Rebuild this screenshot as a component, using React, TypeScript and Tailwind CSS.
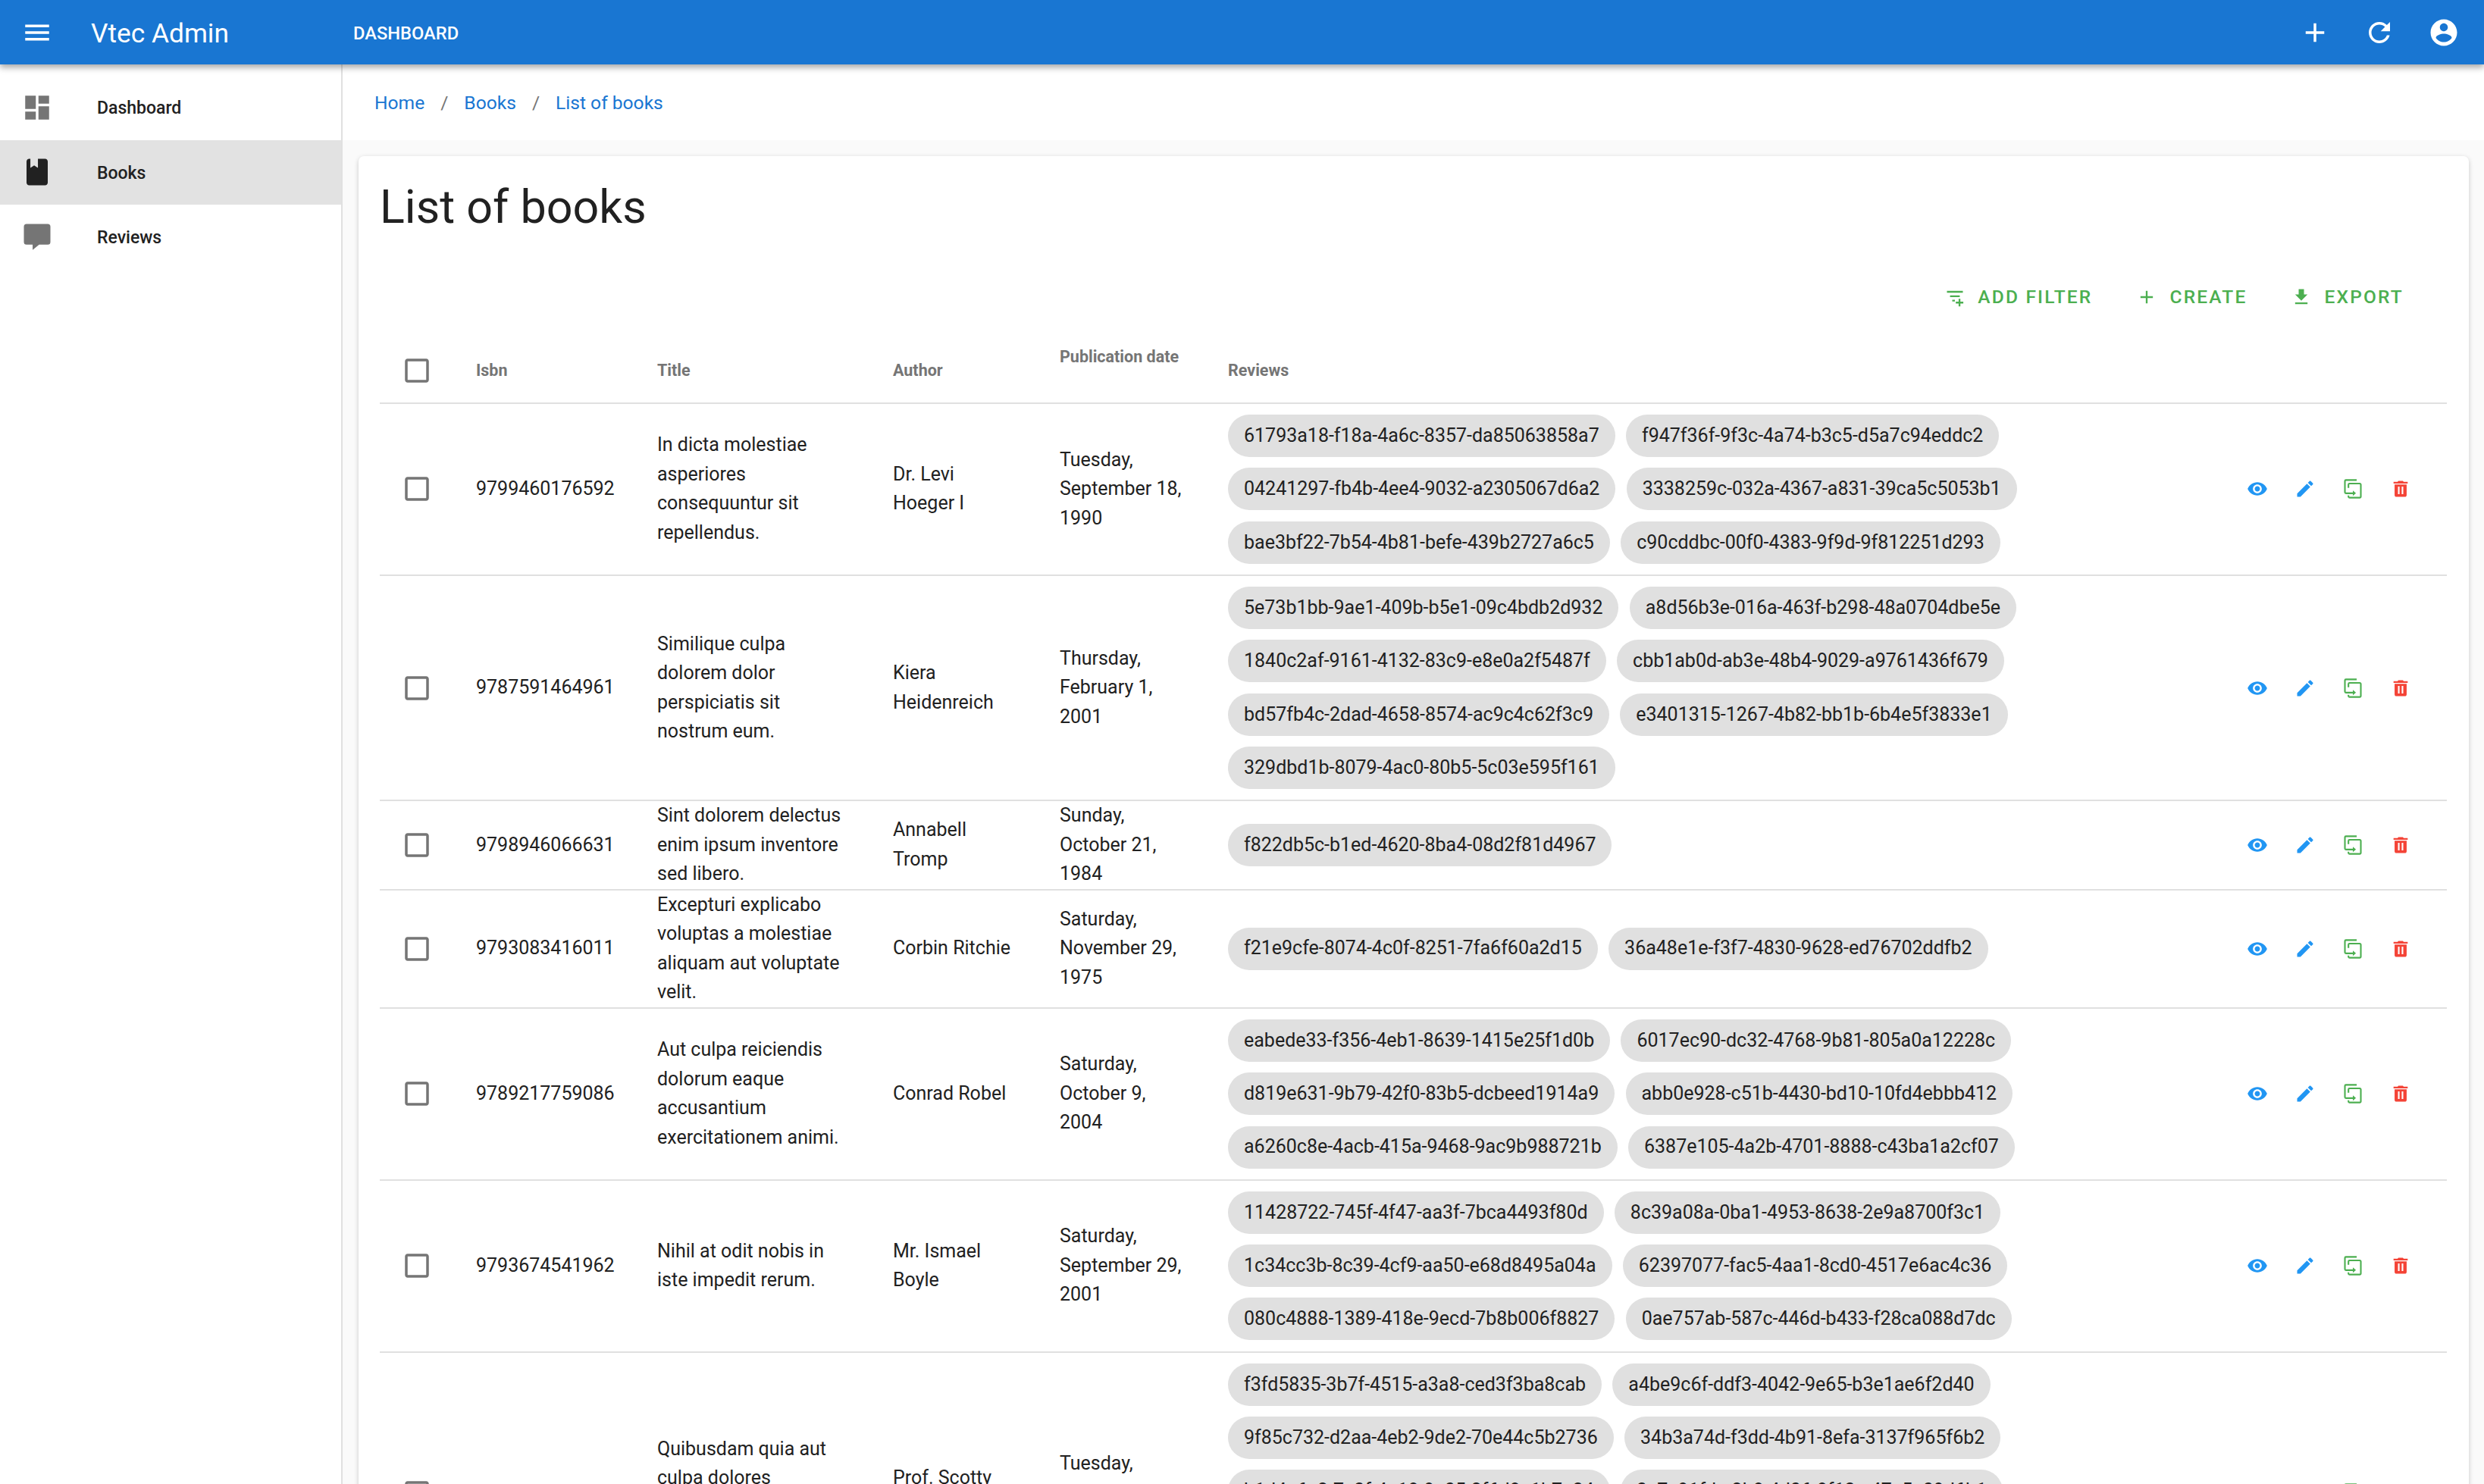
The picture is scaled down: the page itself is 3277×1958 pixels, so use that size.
import React from "react";

const P = {
  menu: "M3 18h18v-2H3v2zm0-5h18v-2H3v2zm0-7v2h18V6H3z",
  dash: "M3 13h8V3H3v10zm0 8h8v-6H3v6zm10 0h8V11h-8v10zm0-18v6h8V3h-8z",
  book: "M18 2h-5.4v6.8L9.75 7 6.9 8.8V2H6C4.9 2 4 2.9 4 4v16c0 1.1.9 2 2 2h12c1.1 0 2-.9 2-2V4c0-1.1-.9-2-2-2z",
  comment: "M4 2h16a2 2 0 0 1 2 2v11.6a2 2 0 0 1-2 2h-6.5L8.6 21.6V17.6H4a2 2 0 0 1-2-2V4a2 2 0 0 1 2-2z",
  add: "M19 13h-6v6h-2v-6H5v-2h6V5h2v6h6v2z",
  refresh: "M17.65 6.35C16.2 4.9 14.21 4 12 4c-4.42 0-7.99 3.58-7.99 8s3.57 8 7.99 8c3.73 0 6.84-2.55 7.73-6h-2.08c-.82 2.33-3.04 4-5.65 4-3.31 0-6-2.69-6-6s2.69-6 6-6c1.66 0 3.14.69 4.22 1.78L13 11h7V4l-2.35 2.35z",
  account: "M12 2C6.48 2 2 6.48 2 12s4.48 10 10 10 10-4.48 10-10S17.52 2 12 2zm0 3c1.66 0 3 1.34 3 3s-1.34 3-3 3-3-1.34-3-3 1.34-3 3-3zm0 14.2c-2.5 0-4.71-1.28-6-3.22.03-1.99 4-3.08 6-3.08 1.99 0 5.97 1.09 6 3.08-1.29 1.94-3.5 3.22-6 3.22z",
  filter: "M3 5h18v2H3zM6.5 10h11v2h-11zM9 15h3v2H9zM16.2 14h2v3.2h3.3v2h-3.3v3.3h-2v-3.3H13v-2h3.2z",
  download: "M19 9h-4V3H9v6H5l7 7 7-7zM5 18v2h14v-2H5z",
  eye: "M12 4.5C7 4.5 2.73 7.61 1 12c1.73 4.39 6 7.5 11 7.5s9.27-3.11 11-7.5c-1.73-4.39-6-7.5-11-7.5zM12 17c-2.76 0-5-2.24-5-5s2.24-5 5-5 5 2.24 5 5-2.24 5-5 5zm0-8c-1.66 0-3 1.34-3 3s1.34 3 3 3 3-1.34 3-3-1.34-3-3-3z",
  edit: "M3 17.25V21h3.75L17.81 9.94l-3.75-3.75L3 17.25zM20.71 7.04c.39-.39.39-1.02 0-1.41l-2.34-2.34c-.39-.39-1.02-.39-1.41 0l-1.83 1.83 3.75 3.75 1.83-1.83z",
  trash: "M5.2 19c0 1.1.9 2 2 2h9.6c1.1 0 2-.9 2-2V7H5.2v12zM20 4h-4.5l-1-1h-5l-1 1H4v2h16V4zM9 9.5V18h1.8V9.5zM13.2 9.5V18H15V9.5z",
  box: "M19 5v14H5V5h14m0-2H5c-1.1 0-2 .9-2 2v14c0 1.1.9 2 2 2h14c1.1 0 2-.9 2-2V5c0-1.1-.9-2-2-2z",
};

function Icon({ d, className }: { d: string; className: string }) {
  return (
    <svg viewBox="0 0 24 24" fill="currentColor" fillRule="evenodd" className={`shrink-0 ${className}`}>
      <path d={d} />
    </svg>
  );
}

function CloneIcon() {
  return (
    <svg viewBox="0 0 24 24" className="w-[28px] h-[28px] shrink-0 text-[#4caf50]" fill="none" stroke="currentColor" strokeWidth="1.8">
      <path d="M16.3 2H4.2a1.2 1.2 0 0 0-1.2 1.2v12.6a1.2 1.2 0 0 0 1.2 1.2H12" />
      <path d="M7 11V7.2A1.2 1.2 0 0 1 8.2 6h11.6A1.2 1.2 0 0 1 21 7.2v13.6a1.2 1.2 0 0 1-1.2 1.2H8.2A1.2 1.2 0 0 1 7 20.8V19.5" />
      <path d="M12 14v6l3.5-3z" fill="currentColor" stroke="none" />
    </svg>
  );
}

const Check = () => <Icon d={P.box} className="w-[42px] h-[42px] text-[#757575]" />;

type Row = { isbn: string; title: string; author: string; date: string; chips: string[] };

const rows: Row[] = [
  {
    isbn: "9799460176592",
    title: "In dicta molestiae asperiores consequuntur sit repellendus.",
    author: "Dr. Levi Hoeger I",
    date: "Tuesday, September 18, 1990",
    chips: [
      "61793a18-f18a-4a6c-8357-da85063858a7",
      "f947f36f-9f3c-4a74-b3c5-d5a7c94eddc2",
      "04241297-fb4b-4ee4-9032-a2305067d6a2",
      "3338259c-032a-4367-a831-39ca5c5053b1",
      "bae3bf22-7b54-4b81-befe-439b2727a6c5",
      "c90cddbc-00f0-4383-9f9d-9f812251d293",
    ],
  },
  {
    isbn: "9787591464961",
    title: "Similique culpa dolorem dolor perspiciatis sit nostrum eum.",
    author: "Kiera Heidenreich",
    date: "Thursday, February 1, 2001",
    chips: [
      "5e73b1bb-9ae1-409b-b5e1-09c4bdb2d932",
      "a8d56b3e-016a-463f-b298-48a0704dbe5e",
      "1840c2af-9161-4132-83c9-e8e0a2f5487f",
      "cbb1ab0d-ab3e-48b4-9029-a9761436f679",
      "bd57fb4c-2dad-4658-8574-ac9c4c62f3c9",
      "e3401315-1267-4b82-bb1b-6b4e5f3833e1",
      "329dbd1b-8079-4ac0-80b5-5c03e595f161",
    ],
  },
  {
    isbn: "9798946066631",
    title: "Sint dolorem delectus enim ipsum inventore sed libero.",
    author: "Annabell Tromp",
    date: "Sunday, October 21, 1984",
    chips: ["f822db5c-b1ed-4620-8ba4-08d2f81d4967"],
  },
  {
    isbn: "9793083416011",
    title: "Excepturi explicabo voluptas a molestiae aliquam aut voluptate velit.",
    author: "Corbin Ritchie",
    date: "Saturday, November 29, 1975",
    chips: ["f21e9cfe-8074-4c0f-8251-7fa6f60a2d15", "36a48e1e-f3f7-4830-9628-ed76702ddfb2"],
  },
  {
    isbn: "9789217759086",
    title: "Aut culpa reiciendis dolorum eaque accusantium exercitationem animi.",
    author: "Conrad Robel",
    date: "Saturday, October 9, 2004",
    chips: [
      "eabede33-f356-4eb1-8639-1415e25f1d0b",
      "6017ec90-dc32-4768-9b81-805a0a12228c",
      "d819e631-9b79-42f0-83b5-dcbeed1914a9",
      "abb0e928-c51b-4430-bd10-10fd4ebbb412",
      "a6260c8e-4acb-415a-9468-9ac9b988721b",
      "6387e105-4a2b-4701-8888-c43ba1a2cf07",
    ],
  },
  {
    isbn: "9793674541962",
    title: "Nihil at odit nobis in iste impedit rerum.",
    author: "Mr. Ismael Boyle",
    date: "Saturday, September 29, 2001",
    chips: [
      "11428722-745f-4f47-aa3f-7bca4493f80d",
      "8c39a08a-0ba1-4953-8638-2e9a8700f3c1",
      "1c34cc3b-8c39-4cf9-aa50-e68d8495a04a",
      "62397077-fac5-4aa1-8cd0-4517e6ac4c36",
      "080c4888-1389-418e-9ecd-7b8b006f8827",
      "0ae757ab-587c-446d-b433-f28ca088d7dc",
    ],
  },
  {
    isbn: "9781234567897",
    title: "Quibusdam quia aut culpa dolores reprehenderit et quis mollitia nam.",
    author: "Prof. Scotty Schiller",
    date: "Tuesday, September 4, 1984",
    chips: [
      "f3fd5835-3b7f-4515-a3a8-ced3f3ba8cab",
      "a4be9c6f-ddf3-4042-9e65-b3e1ae6f2d40",
      "9f85c732-d2aa-4eb2-9de2-70e44c5b2736",
      "34b3a74d-f3dd-4b91-8efa-3137f965f6b2",
      "b1d4a6c2-7e3f-4a18-9c05-2f6d8e1b7a34",
      "3e7c91fd-a2b8-4d06-8f13-c47e5a09d6b1",
      "7a02e6b9-41cd-4f7e-b358-90d1c6ef2a47",
      "d59f3b18-6c0a-4e92-a7d4-18b3f7c2e065",
      "2c8ea714-f09d-4b63-8a21-6de05b94c7f3",
      "94b7d0e2-3a16-4c58-9fe7-a1c28d6f5b30",
    ],
  },
];

function Chip({ text }: { text: string }) {
  return (
    <span className="h-[56px] flex items-center rounded-full bg-[#e0e0e0] px-[21px] text-[25px] text-[#212121] whitespace-nowrap">
      {text}
    </span>
  );
}

function SideItem({ d, label, active }: { d: string; label: string; active?: boolean }) {
  return (
    <div className={`h-[85.5px] flex items-center pl-[28px] gap-[58px] ${active ? "bg-[#e2e2e2]" : ""}`}>
      <Icon d={d} className={`w-[42px] h-[42px] ${active ? "text-[#212121]" : "text-[#757575]"}`} />
      <span className="pt-[3px] text-[23px] font-medium text-[#212121]">{label}</span>
    </div>
  );
}

function TB({ d, label }: { d: string; label: string }) {
  return (
    <div className="flex items-center gap-[16px] text-[#4caf50]">
      <Icon d={d} className="w-[28px] h-[28px]" />
      <span className="text-[24.5px] font-medium tracking-[2.2px]">{label}</span>
    </div>
  );
}

export default function App() {
  return (
    <div className="h-[1958px] overflow-hidden flex flex-col bg-white text-[#212121] font-['Roboto',sans-serif]">
      <header className="relative z-10 h-[85px] shrink-0 flex items-center bg-[#1976d2] text-white pl-[28px] pr-[32px] shadow-[0_4px_8px_rgba(0,0,0,0.35)]">
        <Icon d={P.menu} className="w-[42px] h-[42px]" />
        <div className="ml-[50px] w-[346px] pt-[3px] text-[35.3px]">Vtec Admin</div>
        <div className="pt-[5px] text-[23.7px] font-medium">DASHBOARD</div>
        <div className="ml-auto flex items-center gap-[43px]">
          <Icon d={P.add} className="w-[42px] h-[42px]" />
          <Icon d={P.refresh} className="w-[42px] h-[42px]" />
          <Icon d={P.account} className="w-[42px] h-[42px]" />
        </div>
      </header>
      <div className="flex flex-1 min-h-0">
        <aside className="w-[452px] shrink-0 border-r-[2px] border-[#e0e0e0] pt-[14px] bg-white">
          <SideItem d={P.dash} label="Dashboard" />
          <SideItem d={P.book} label="Books" active />
          <SideItem d={P.comment} label="Reviews" />
        </aside>
        <main className="flex-1 min-w-0 flex flex-col bg-[#fafafa]">
          <nav className="h-[100px] shrink-0 bg-white flex items-center pl-[42px] pt-[3px] text-[24.6px] text-[#1976d2]">
            <span>Home</span>
            <span className="mx-[21px] text-[#757575]">/</span>
            <span>Books</span>
            <span className="mx-[21px] text-[#757575]">/</span>
            <span>List of books</span>
          </nav>
          <div className="flex-1 min-h-0 pl-[21px] pr-[20px] pt-[21px]">
            <section className="bg-white rounded-[7px] pl-[28px] pr-[29px] shadow-[0_2px_6px_rgba(0,0,0,0.2)]">
              <h1 className="h-[132px] flex items-center pt-[3px] text-[61px] font-normal">List of books</h1>
              <div className="h-[108px] flex items-center justify-end pr-[57px] gap-[58px]">
                <TB d={P.filter} label="ADD FILTER" />
                <TB d={P.add} label="CREATE" />
                <TB d={P.download} label="EXPORT" />
              </div>
              <table className="w-full table-fixed border-collapse">
                <colgroup>
                  <col className="w-[127px]" />
                  <col className="w-[239px]" />
                  <col className="w-[311px]" />
                  <col className="w-[220px]" />
                  <col className="w-[222px]" />
                  <col />
                  <col className="w-[288px]" />
                </colgroup>
                <thead>
                  <tr className="h-[86px] border-b-[2px] border-[#e0e0e0] text-left text-[21.5px] font-bold text-[#757575]">
                    <th className="pl-[28px]"><Check /></th>
                    <th className="pt-[1px]">Isbn</th>
                    <th className="pt-[1px]">Title</th>
                    <th className="pt-[1px]">Author</th>
                    <th className="pb-[34px]">Publication date</th>
                    <th className="pt-[1px]">Reviews</th>
                    <th />
                  </tr>
                </thead>
                <tbody>
                  {rows.map((r, i) => (
                    <tr key={r.isbn} className="border-b-[2px] border-[#e0e0e0] text-[25px] leading-[38.5px]">
                      <td className="pl-[28px] align-middle"><Check /></td>
                      <td>{r.isbn}</td>
                      <td className="pr-[58px]">{r.title}</td>
                      <td className="pr-[55px]">{r.author}</td>
                      <td className="pr-[54px]">{r.date}</td>
                      <td className={i === 6 ? "pt-[14.2px] pb-[19px]" : "py-[14.2px]"}>
                        <div className="flex flex-wrap gap-[14.3px]">
                          {r.chips.map((c) => <Chip key={c} text={c} />)}
                        </div>
                      </td>
                      <td>
                        <div className="flex items-center justify-end gap-[35px] pr-[47px]">
                          <Icon d={P.eye} className="w-[28px] h-[28px] text-[#2196f3]" />
                          <Icon d={P.edit} className="w-[28px] h-[28px] text-[#2196f3]" />
                          <CloneIcon />
                          <Icon d={P.trash} className="w-[28px] h-[28px] text-[#f44336]" />
                        </div>
                      </td>
                    </tr>
                  ))}
                </tbody>
              </table>
            </section>
          </div>
        </main>
      </div>
    </div>
  );
}
